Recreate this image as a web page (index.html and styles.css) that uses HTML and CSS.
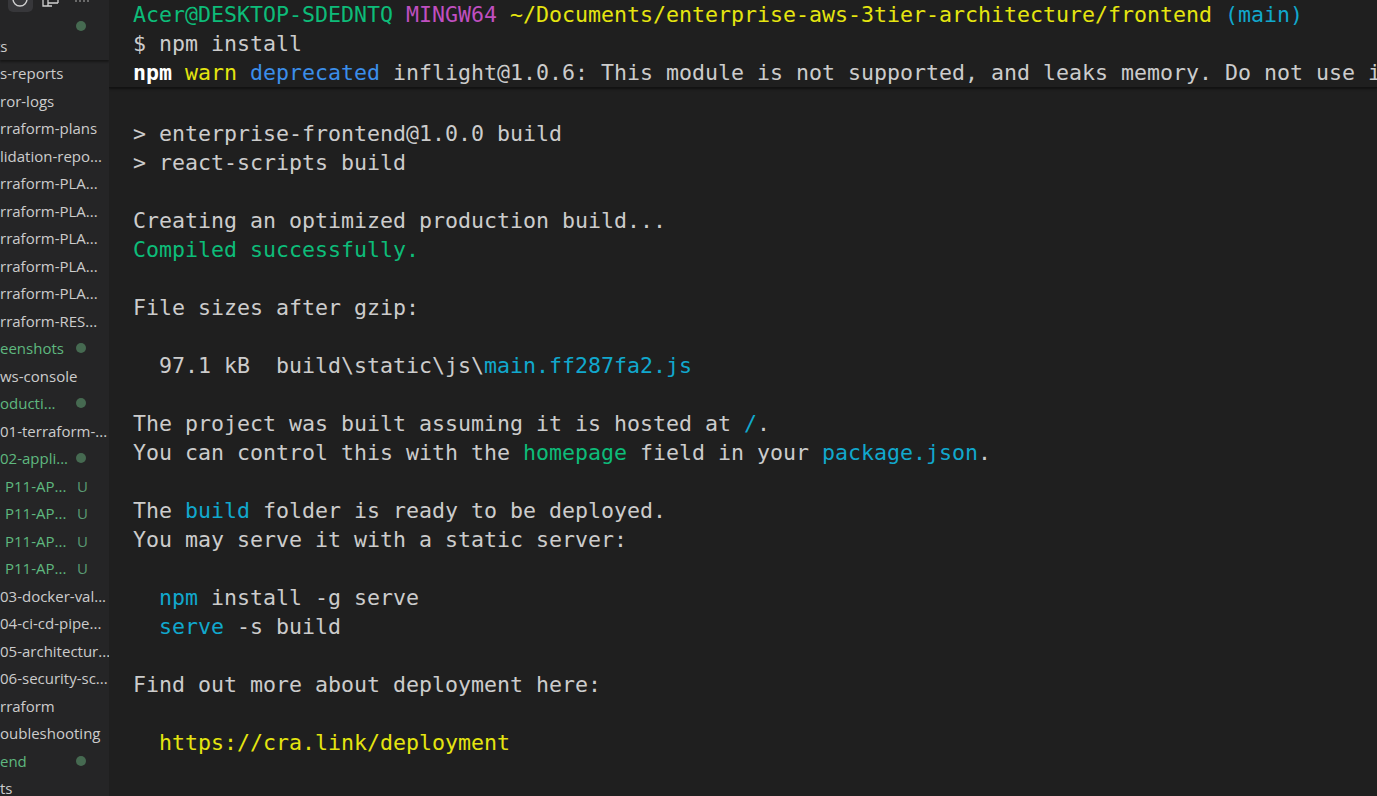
FILE: index.html
```html
<!DOCTYPE html>
<html lang="en">
<head>
    <meta charset="UTF-8">
    <meta name="viewport" content="width=device-width, initial-scale=1.0">
    <title>Terminal</title>
    <link rel="stylesheet" href="styles.css">
</head>
<body>
    <aside class="sidebar">
        <div class="sidebar-top">
            <div class="actions">
                <div class="action-btn">
                    <svg width="25" height="12" viewBox="0 0 25 12"><circle cx="12" cy="-1" r="7" fill="none" stroke="#d0d0d0" stroke-width="1.4"/></svg>
                </div>
                <svg class="copy-icon" width="18" height="12" viewBox="0 0 18 12"><path d="M1 0v6h5M6 0v6h4M6 3h10M16 0v3" fill="none" stroke="#d0d0d0" stroke-width="1.3"/></svg>
                <span class="dots"></span>
            </div>
            <div class="top-dot-row"><span class="dot"></span></div>
        </div>
        <div class="row row-scripts"><span class="name cut">ts</span></div>
        <ul class="tree">
            <li class="row"><span class="name">s-reports</span></li>
            <li class="row"><span class="name">ror-logs</span></li>
            <li class="row"><span class="name">rraform-plans</span></li>
            <li class="row"><span class="name">lidation-repo...</span></li>
            <li class="row"><span class="name">rraform-PLA...</span></li>
            <li class="row"><span class="name">rraform-PLA...</span></li>
            <li class="row"><span class="name">rraform-PLA...</span></li>
            <li class="row"><span class="name">rraform-PLA...</span></li>
            <li class="row"><span class="name">rraform-PLA...</span></li>
            <li class="row"><span class="name">rraform-RES...</span></li>
            <li class="row green"><span class="name">eenshots</span><span class="dot"></span></li>
            <li class="row"><span class="name">ws-console</span></li>
            <li class="row green"><span class="name">oducti...</span><span class="dot"></span></li>
            <li class="row"><span class="name">01-terraform-...</span></li>
            <li class="row green"><span class="name">02-appli...</span><span class="dot"></span></li>
            <li class="row green file"><span class="name">P11-AP...</span><span class="badge">U</span></li>
            <li class="row green file"><span class="name">P11-AP...</span><span class="badge">U</span></li>
            <li class="row green file"><span class="name">P11-AP...</span><span class="badge">U</span></li>
            <li class="row green file"><span class="name">P11-AP...</span><span class="badge">U</span></li>
            <li class="row"><span class="name">03-docker-val...</span></li>
            <li class="row"><span class="name">04-ci-cd-pipe...</span></li>
            <li class="row"><span class="name">05-architectur...</span></li>
            <li class="row"><span class="name">06-security-sc...</span></li>
            <li class="row"><span class="name">rraform</span></li>
            <li class="row"><span class="name">oubleshooting</span></li>
            <li class="row green"><span class="name">end</span><span class="dot"></span></li>
            <li class="row"><span class="name">ts</span></li>
        </ul>
    </aside>

    <main class="terminal">
        <div class="sticky-head">
            <div class="line"><span class="c-green">Acer@DESKTOP-SDEDNTQ</span> <span class="c-magenta">MINGW64</span> <span class="c-yellow">~/Documents/enterprise-aws-3tier-architecture/frontend</span> <span class="c-cyan">(main)</span></div>
            <div class="line">$ npm install</div>
            <div class="line"><span class="c-bold">npm</span> <span class="c-yellow">warn</span> <span class="c-blue">deprecated</span> inflight@1.0.6: This module is not supported, and leaks memory. Do not use it.</div>
        </div>
        <div class="output">
            <div class="line">&gt; enterprise-frontend@1.0.0 build</div>
            <div class="line">&gt; react-scripts build</div>
            <div class="line">&nbsp;</div>
            <div class="line">Creating an optimized production build...</div>
            <div class="line c-green">Compiled successfully.</div>
            <div class="line">&nbsp;</div>
            <div class="line">File sizes after gzip:</div>
            <div class="line">&nbsp;</div>
            <div class="line">  97.1 kB  build\static\js\<span class="c-cyan">main.ff287fa2.js</span></div>
            <div class="line">&nbsp;</div>
            <div class="line">The project was built assuming it is hosted at <span class="c-cyan">/</span>.</div>
            <div class="line">You can control this with the <span class="c-green">homepage</span> field in your <span class="c-cyan">package.json</span>.</div>
            <div class="line">&nbsp;</div>
            <div class="line">The <span class="c-cyan">build</span> folder is ready to be deployed.</div>
            <div class="line">You may serve it with a static server:</div>
            <div class="line">&nbsp;</div>
            <div class="line">  <span class="c-cyan">npm</span> install -g serve</div>
            <div class="line">  <span class="c-cyan">serve</span> -s build</div>
            <div class="line">&nbsp;</div>
            <div class="line">Find out more about deployment here:</div>
            <div class="line">&nbsp;</div>
            <div class="line">  <span class="c-yellow">https://cra.link/deployment</span></div>
        </div>
    </main>
</body>
</html>
```

FILE: styles.css
```css
* {
    box-sizing: border-box;
}

body {
    margin: 0;
    display: flex;
    height: 796px;
    overflow: hidden;
    background-color: #1f1f1f;
    color: #cccccc;
}

.sidebar {
    width: 109px;
    flex-shrink: 0;
    background-color: #252526;
    font-family: 'Open Sans', sans-serif;
    font-size: 15px;
    overflow: hidden;
}

.sidebar-top {
    height: 32px;
}

.actions {
    height: 12px;
    display: flex;
    align-items: flex-start;
    gap: 9px;
    padding-left: 8px;
}

.action-btn {
    width: 25px;
    height: 12px;
    background-color: #37373a;
    border-radius: 0 0 5px 5px;
}

.action-btn svg,
.copy-icon {
    display: block;
}

.dots {
    width: 14px;
    height: 2px;
    margin-left: 6px;
    border-bottom: 2px dotted #6a6a6a;
}

.top-dot-row {
    padding: 9px 0 0 76px;
}

.row-scripts {
    height: 26.6px;
    background-color: #252526;
    box-shadow: 0 2px 2px rgba(0, 0, 0, 0.4);
    position: relative;
}

.tree {
    list-style: none;
    margin: 0;
    padding: 0;
}

.row {
    height: 27.5px;
    display: flex;
    align-items: center;
    white-space: nowrap;
    color: #cccccc;
}

.name {
    flex: 0 0 76px;
    width: 76px;
}

.name.cut {
    margin-left: -5px;
}

.row.file .name {
    padding-left: 5px;
}

.green .name {
    color: #5fb87f;
}

.dot {
    display: block;
    width: 10px;
    height: 10px;
    border-radius: 50%;
    background-color: #466a51;
}

.badge {
    color: #5a9b74;
    font-size: 15px;
    margin-left: 1px;
}

.terminal {
    flex: 1;
    min-width: 0;
    overflow: hidden;
    font-family: 'DejaVu Sans Mono', monospace;
    font-size: 21.6px;
    color: #cccccc;
}

.sticky-head {
    height: 88px;
    padding-left: 24px;
    background-color: #1f1f1f;
    border-bottom: 1px solid #121212;
    box-shadow: 0 1px 2px rgba(0, 0, 0, 0.5);
    overflow: hidden;
}

.output {
    margin-top: 31px;
    padding-left: 24px;
}

.line {
    height: 29px;
    line-height: 29px;
    white-space: pre;
}

.c-green { color: #0dbc79; }
.c-magenta { color: #c04fc0; }
.c-yellow { color: #e5e510; }
.c-cyan { color: #11a8cd; }
.c-blue { color: #3b8eea; }
.c-bold { color: #ffffff; font-weight: bold; }
```
